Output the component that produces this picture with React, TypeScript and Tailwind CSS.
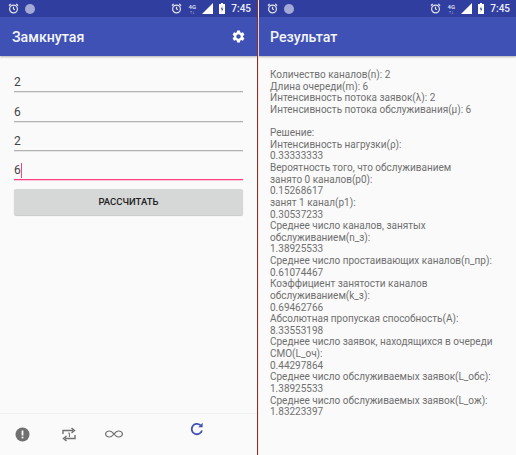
const LINES = [
  'Количество каналов(n): 2',
  'Длина очереди(m): 6',
  'Интенсивность потока заявок(λ): 2',
  'Интенсивность потока обслуживания(μ): 6',
  '\u00a0',
  'Решение:',
  'Интенсивность нагрузки(ρ):',
  '0.33333333',
  'Вероятность того, что обслуживанием',
  'занято 0 каналов(p0):',
  '0.15268617',
  'занят 1 канал(p1):',
  '0.30537233',
  'Среднее число каналов, занятых',
  'обслуживанием(n_з):',
  '1.38925533',
  'Среднее число простаивающих каналов(n_пр):',
  '0.61074467',
  'Коэффициент занятости каналов',
  'обслуживанием(k_з):',
  '0.69462766',
  'Абсолютная пропуская способность(A):',
  '8.33553198',
  'Среднее число заявок, находящихся в очереди',
  'СМО(L_оч):',
  '0.44297864',
  'Среднее число обслуживаемых заявок(L_обс):',
  '1.38925533',
  'Среднее число обслуживаемых заявок(L_ож):',
  '1.83223397',
];

function AlarmIcon() {
  return (
    <svg width="11" height="11" viewBox="0 0 24 24" fill="none" stroke="#e4e6f3" strokeWidth="2.6">
      <circle cx="12" cy="13" r="8.5" />
      <path d="M12 8v5l3 2M2 6l4-4M22 6l-4-4" />
    </svg>
  );
}

function StatusBar() {
  return (
    <div className="h-[17px] bg-[#303f9f] flex items-center pl-2 pr-[6px] text-white">
      <AlarmIcon />
      <div className="w-[10px] h-[10px] rounded-full bg-[#a3a9d6] ml-[6px]" />
      <div className="flex-1" />
      <AlarmIcon />
      <div className="ml-[5px] w-[10px] text-[6px] leading-[6px] font-bold text-[#d5d8ee] text-center">
        4G
        <div className="text-[5px] leading-[4px]">↑↓</div>
      </div>
      <svg className="ml-[5px]" width="11" height="11" viewBox="0 0 11 11">
        <path d="M11 0V11H0Z" fill="#fff" />
      </svg>
      <svg className="ml-[6px]" width="6" height="11" viewBox="0 0 6 11">
        <path d="M2 0h2v1h2v10H0V1h2z" fill="#fff" />
        <path d="M3.4 3 1.8 6.400h1.200L2.600 9l1.700-3.400H3.100z" fill="#303f9f" />
      </svg>
      <span className="ml-[6px] text-[10px] font-medium text-[#eceef8]">7:45</span>
    </div>
  );
}

function AppBar({ title, gear }: { title: string; gear?: boolean }) {
  return (
    <div className={gear ? 'h-[39px] bg-[#3f51b5] flex items-center justify-between pl-3 pr-[11px] pt-[2px] shadow-[0_1px_2px_rgba(0,0,0,0.3)]' : 'h-[39px] bg-[#3f51b5] flex items-center pl-[11px] pt-[2px] shadow-[0_1px_2px_rgba(0,0,0,0.3)]'}>
      <span className="text-[14.2px] leading-none font-medium text-[#f4f5fb]">{title}</span>
      {gear && (
        <svg width="15" height="15" viewBox="0 0 24 24" className="-mt-[2px]">
          <path
            fill="#fff"
            fillRule="evenodd"
            d="M19.140 12.940c.04-.3.06-.61.06-.94 0-.32-.02-.64-.07-.94l2.030-1.580c.18-.14.23-.41.12-.61l-1.920-3.320c-.12-.22-.37-.29-.59-.22l-2.390.96c-.5-.38-1.030-.7-1.620-.94l-.36-2.540c-.04-.24-.24-.41-.48-.41h-3.840c-.24 0-.43.17-.47.41l-.36 2.540c-.59.24-1.130.57-1.620.94l-2.390-.96c-.22-.08-.47 0-.59.22L2.740 8.870c-.12.21-.08.47.12.61l2.030 1.580c-.05.3-.09.63-.09.94s.02.64.07.94l-2.030 1.580c-.18.14-.23.41-.12.61l1.920 3.320c.12.22.37.29.59.22l2.390-.96c.5.38 1.030.7 1.620.94l.36 2.540c.05.24.24.41.48.41h3.840c.24 0 .44-.17.47-.41l.36-2.540c.59-.24 1.130-.56 1.620-.94l2.390.96c.22.08.47 0 .59-.22l1.920-3.320c.12-.22.07-.47-.12-.61l-2.010-1.580zM12 15.600c-1.980 0-3.600-1.620-3.600-3.600s1.620-3.600 3.600-3.600 3.600 1.620 3.600 3.600-1.620 3.600-3.600 3.600z"
          />
        </svg>
      )}
    </div>
  );
}

function Field({ value, active }: { value: string; active?: boolean }) {
  return (
    <div className="h-[29.3px] flex flex-col justify-end">
      <div className="flex items-center h-[15px] mb-[1px] text-[12px] leading-[15px] text-[#444]">
        {value}
        {active && <span className="w-px h-[15px] bg-[#ff4081]" />}
      </div>
      <div className={active ? 'h-px bg-[#ff4081] shadow-[0_1px_0_#ffc6d9]' : 'h-px bg-[#b3b3b3] shadow-[0_1px_0_#e6e6e6]'} />
    </div>
  );
}

export default function App() {
  return (
    <div className="w-[516px] h-[455px] flex bg-[#fafafa] font-['Roboto',sans-serif] overflow-hidden">
      <div className="w-[257px] flex flex-col">
        <StatusBar />
        <AppBar title="Замкнутая" gear />
        <div className="flex-1 px-[14px] pt-[7px]">
          <Field value="2" />
          <Field value="6" />
          <Field value="2" />
          <Field value="6" active />
          <div className="mt-[9px] h-[26px] rounded-[2px] bg-[#d6d7d7] shadow-[0_1px_1px_rgba(0,0,0,0.2)] flex items-center justify-center text-[9.5px] font-medium text-[#222]">
            РАССЧИТАТЬ
          </div>
        </div>
        <div className="h-[42px] border-t border-[#f0f0f0] flex items-start pl-[15px] relative">
          <svg className="mt-[13px]" width="15" height="15" viewBox="0 0 15 15">
            <circle cx="7.500" cy="7.500" r="7" fill="#707070" />
            <rect x="6.600" y="3.500" width="1.800" height="5" fill="#fafafa" />
            <rect x="6.600" y="9.600" width="1.800" height="1.800" fill="#fafafa" />
          </svg>
          <svg className="ml-[32px] mt-[13px]" width="14" height="15" viewBox="0 0 14 15" fill="none" stroke="#707070" strokeWidth="1.400">
            <path d="M1 7V3.500h10M9.500 1l3 2.500-3 2.500M13 8v3.500H3M4.500 9l-3 2.500 3 2.500" />
            <path d="M6.200 6h1.200v4" strokeWidth="1" />
          </svg>
          <svg className="ml-[29px] mt-[16px]" width="18" height="8" viewBox="0 0 18 10" preserveAspectRatio="none" fill="none" stroke="#707070" strokeWidth="1.300">
            <path d="M9 5C7.500 2.600 6.200 1.200 4.400 1.200a3.800 3.800 0 0 0 0 7.600C6.200 8.800 7.500 7.400 9 5c1.500-2.400 2.800-3.800 4.600-3.800a3.800 3.800 0 0 1 0 7.600C11.800 8.800 10.500 7.400 9 5Z" />
          </svg>
          <svg className="absolute left-[190px] top-[8px]" width="14" height="14" viewBox="0 0 14 14" fill="none" stroke="#3f51b5" strokeWidth="1.800">
            <path d="M11.900 8.500A5.200 5.200 0 1 1 10.400 3.200" />
            <path d="M12.600 .8v4.400H8.200z" fill="#3f51b5" stroke="none" />
          </svg>
        </div>
      </div>
      <div className="w-px bg-[#8e2f24]" />
      <div className="w-px bg-[#f8e6e2]" />
      <div className="flex-1 flex flex-col">
        <StatusBar />
        <AppBar title="Результат" />
        <div className="pl-[11px] pt-[13px] text-[10px] leading-[11.62px] text-[#707070]">
          {LINES.map((line, i) => (
            <div key={i} className="whitespace-nowrap">{line}</div>
          ))}
        </div>
      </div>
    </div>
  );
}
